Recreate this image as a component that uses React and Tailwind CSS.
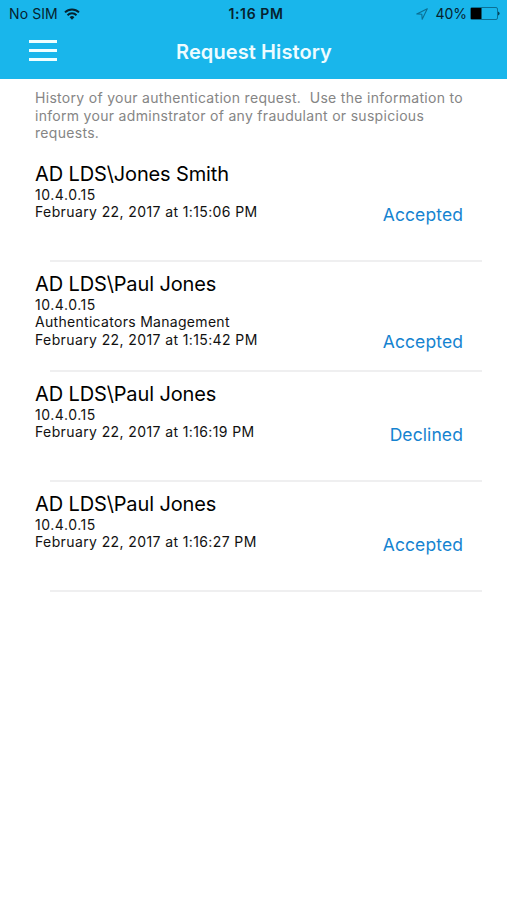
import React from 'react';

const requests = [
  { id: 1, user: 'AD LDS\\Jones Smith', ip: '10.4.0.15', date: 'February 22, 2017 at 1:15:06 PM', status: 'Accepted' },
  { id: 2, user: 'AD LDS\\Paul Jones', ip: '10.4.0.15', source: 'Authenticators Management', date: 'February 22, 2017 at 1:15:42 PM', status: 'Accepted' },
  { id: 3, user: 'AD LDS\\Paul Jones', ip: '10.4.0.15', date: 'February 22, 2017 at 1:16:19 PM', status: 'Declined' },
  { id: 4, user: 'AD LDS\\Paul Jones', ip: '10.4.0.15', date: 'February 22, 2017 at 1:16:27 PM', status: 'Accepted' },
];

const WifiIcon = () => (
  <svg width="16" height="12" viewBox="0 0 16 12" fill="none" stroke="currentColor" strokeWidth="2">
    <path d="M1 4.4a10 10 0 0 1 14 0" />
    <path d="M3.5 7.2a6.4 6.4 0 0 1 9 0" />
    <path d="M5.6 9.3a3.3 3.3 0 0 1 4.8 0L8 11.7z" fill="currentColor" stroke="none" />
  </svg>
);

const LocationIcon = () => (
  <svg width="12" height="12" viewBox="0 0 12 12" fill="none" stroke="currentColor" strokeWidth="1.1">
    <path d="M11.3 .8.8 5.9l5 .4.4 5z" strokeLinejoin="round" />
  </svg>
);

const BatteryIcon = () => (
  <svg width="31" height="13" viewBox="0 0 31 13">
    <rect x="0.5" y="0.5" width="27" height="12" rx="1.5" fill="none" stroke="#0b7095" strokeWidth="1" />
    <rect x="1" y="1" width="10.5" height="11" fill="#000" />
    <path d="M28.2 4.5a2.2 2.2 0 0 1 0 4z" fill="#022a38" />
  </svg>
);

const StatusBar = () => (
  <div className="grid h-[27px] grid-cols-3 items-center text-[#06222e]">
    <div className="flex items-center gap-[6px] pl-[9px]">
      <span className="text-[14px] tracking-[0.1px]">No SIM</span>
      <WifiIcon />
    </div>
    <div className="pl-[5px] text-center text-[14px] font-semibold tracking-[0.6px]">1:16 PM</div>
    <div className="flex items-center justify-end pr-[6px]">
      <span className="mr-[7px] text-[#0b7095]"><LocationIcon /></span>
      <span className="mr-[3px] text-[14px] tracking-[0px]">40%</span>
      <BatteryIcon />
    </div>
  </div>
);

const RequestRow = ({ request }) => (
  <li className="flex h-[110px] flex-col">
    <div className="flex items-end justify-between pr-11 pl-[35px] pt-[10px]">
      <div className="text-[14px] leading-[17.5px] text-[#111]">
        <h2 className="-mb-[1.5px] text-[20px] leading-[25px] tracking-[-0.13px] text-black">{request.user}</h2>
        <p className="tracking-[0.55px]">{request.ip}</p>
        {request.source && <p className="tracking-[0.3px]">{request.source}</p>}
        <p className="tracking-[0.39px]">{request.date}</p>
      </div>
      <span className="-mb-[5px] text-[17.5px] leading-[22px] tracking-[0.1px] text-[#1583d0]">{request.status}</span>
    </div>
    <div className="mt-auto mr-[25px] ml-[50px] h-[2px] bg-[#efeff0]" />
  </li>
);

export default function App() {
  return (
    <div className="min-h-[900px] bg-white font-['Inter','Liberation_Sans',sans-serif]">
      <header className="h-[79px] bg-[#19b6eb]">
        <StatusBar />
        <div className="grid grid-cols-[1fr_auto_1fr] items-center pt-[11px]">
          <button type="button" aria-label="Menu" className="ml-[29px] flex w-[28px] flex-col gap-[6px] self-start pt-[2px]">
            <span className="h-[3px] bg-[#f0ffff]" />
            <span className="h-[3px] bg-[#f0ffff]" />
            <span className="h-[3px] bg-[#f0ffff]" />
          </button>
          <h1 className="pl-px text-[20px] leading-7 font-semibold tracking-[0.1px] text-[#eefcff]">Request History</h1>
        </div>
      </header>

      <main>
        <p className="h-[73px] pt-[10px] pl-[35px] text-[14px] leading-[17.5px] tracking-[0.3px] whitespace-pre text-[#858585]">
          {'History of your authentication request.  Use the information to\ninform your adminstrator of any fraudulant or suspicious\nrequests.'}
        </p>
        <ul>
          {requests.map((request) => (
            <RequestRow key={request.id} request={request} />
          ))}
        </ul>
      </main>
    </div>
  );
}
